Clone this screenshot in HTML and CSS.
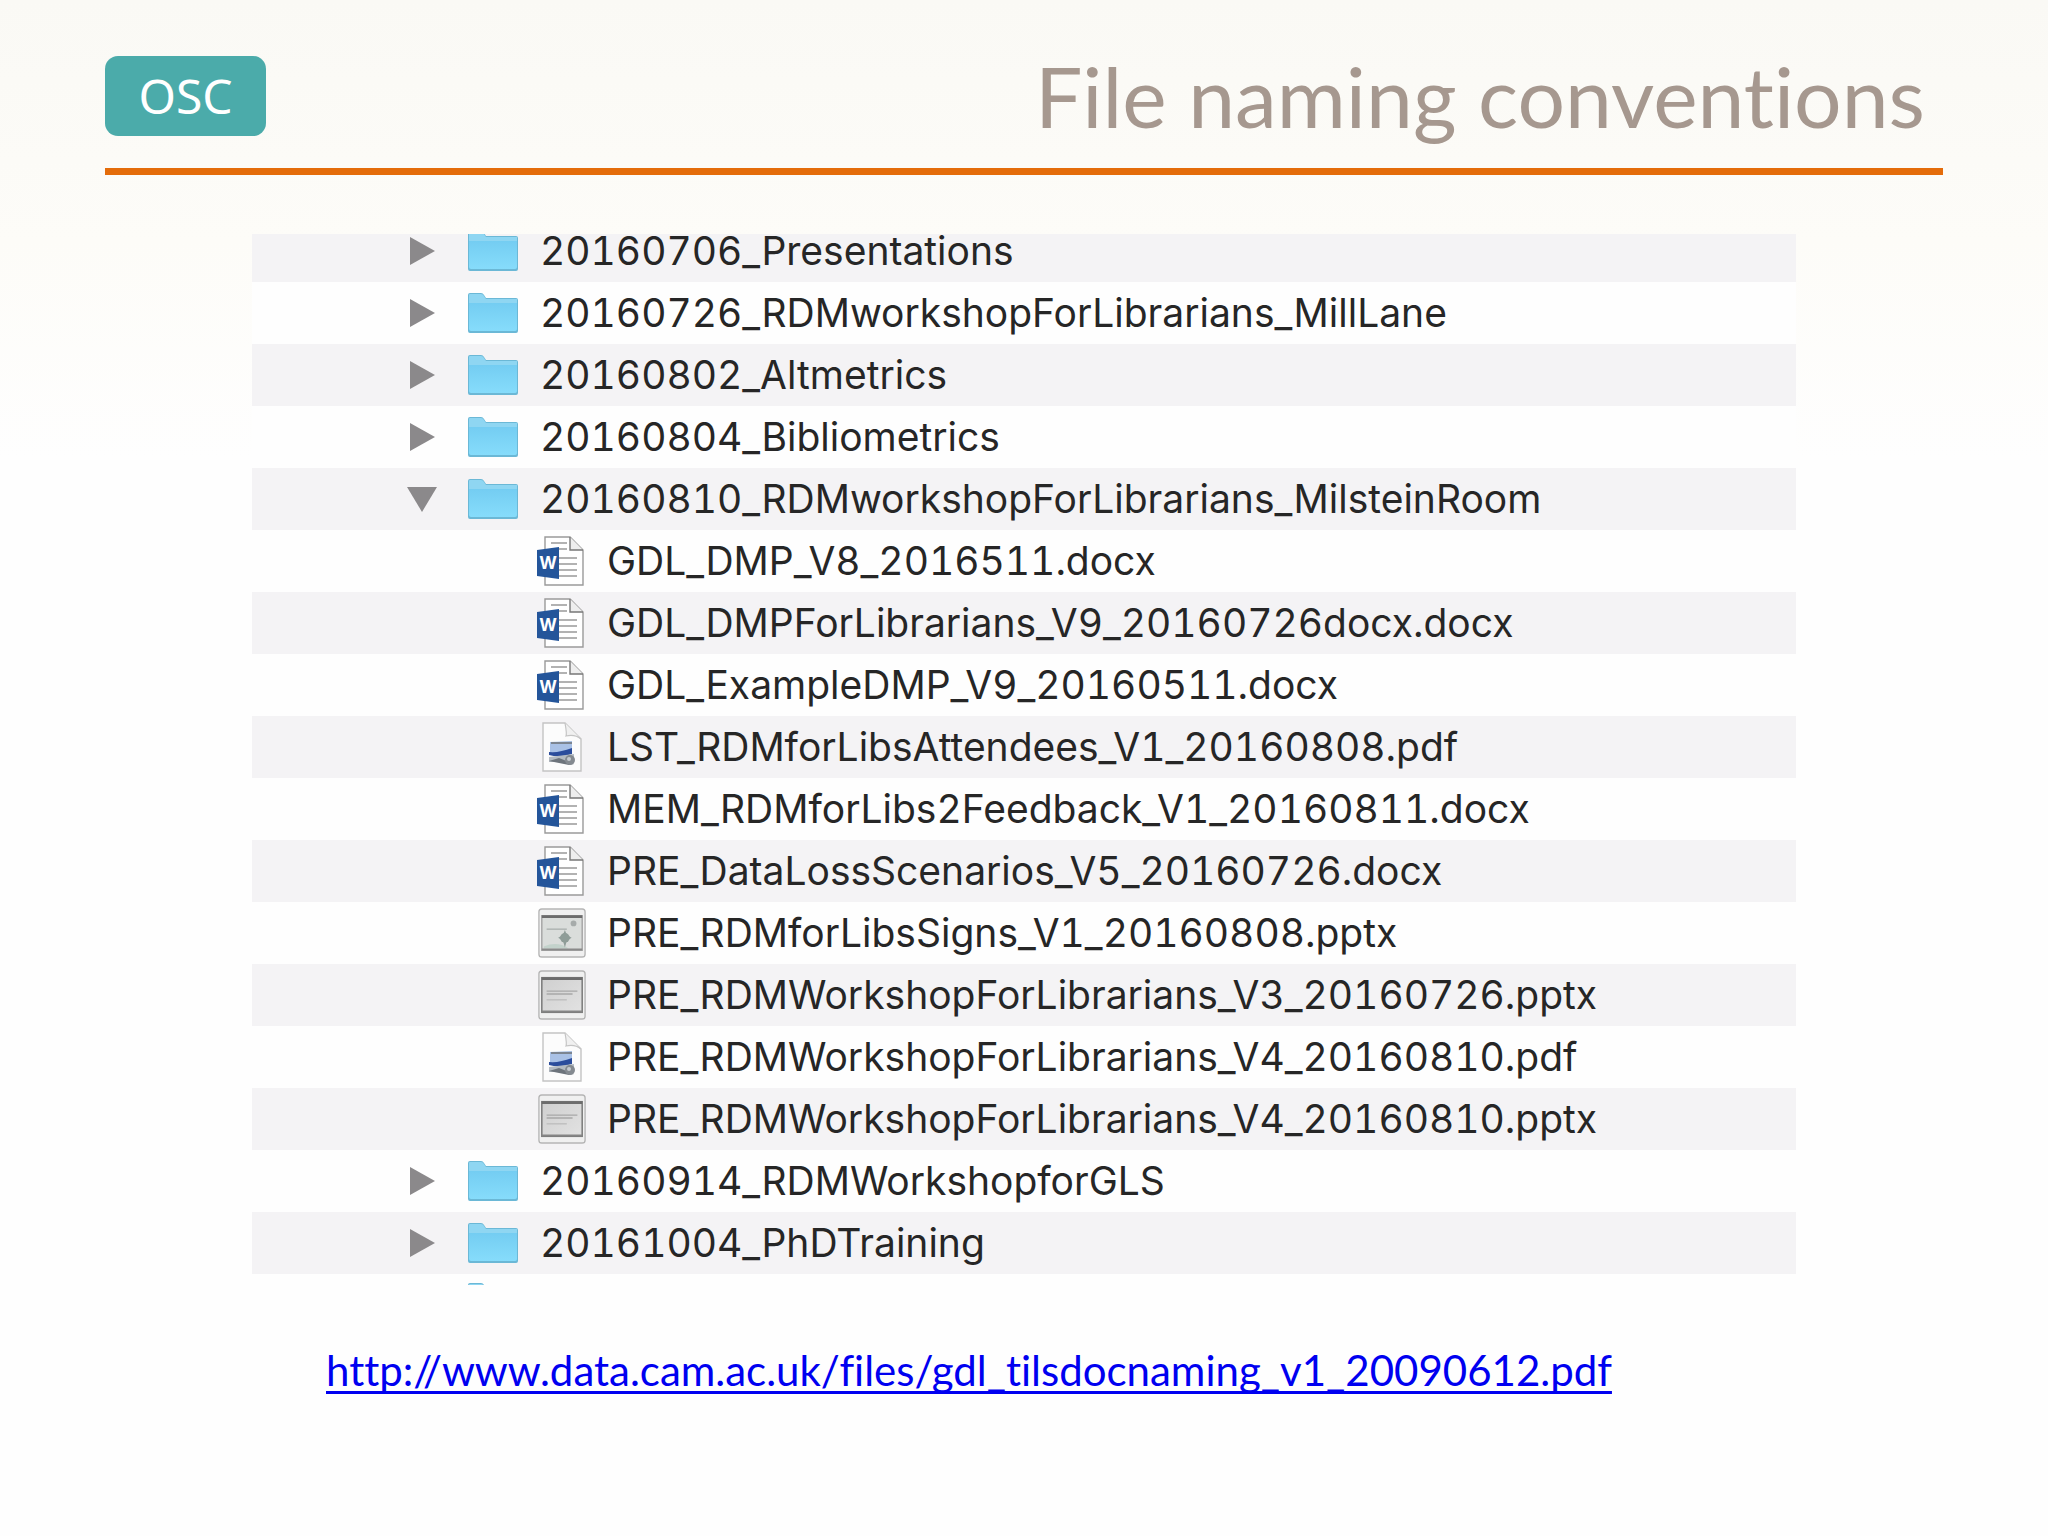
FILE: index.html
```html
<!DOCTYPE html>
<html lang="en">

<head>
    <meta charset="UTF-8">
    <meta name="viewport" content="width=device-width, initial-scale=1.0">
    <title>File naming conventions</title>
    <link rel="stylesheet" href="styles.css">
</head>

<body>
    <!-- Icon shapes, reused by the rows -->
    <svg class="sprites" aria-hidden="true">
        <defs>
            <linearGradient id="folderFill" x1="0" y1="0" x2="0" y2="1">
                <stop offset="0" stop-color="#74cdf2" />
                <stop offset="1" stop-color="#86dcfb" />
            </linearGradient>
            <linearGradient id="slideFill" x1="0" y1="0" x2="1" y2="1">
                <stop offset="0" stop-color="#cfcfcf" />
                <stop offset="1" stop-color="#e2e2e2" />
            </linearGradient>
        </defs>
        <symbol id="right" viewBox="0 0 30 30">
            <path d="M3 1 L28 15 L3 29 Z" fill="#8b898b" />
        </symbol>
        <symbol id="down" viewBox="0 0 30 30">
            <path d="M0 3 H30 L15 28 Z" fill="#8b898b" />
        </symbol>
        <symbol id="folder" viewBox="0 0 50 40">
            <path d="M0 2 Q0 0 2 0 H13 Q15 0 16 2 L18 5 H48 Q50 5 50 7 V38 Q50 40 48 40 H2 Q0 40 0 38 Z" fill="#6bb8d6" />
            <path d="M1 2 Q1 1 2 1 H13 Q15 1 16 3 L18 6 H49 V11 H1 Z" fill="#8fd6f2" />
            <path d="M1 10 H49 V36 Q49 38 47 38 H3 Q1 38 1 36 Z" fill="url(#folderFill)" />
        </symbol>
        <symbol id="word" viewBox="0 0 50 50">
            <path d="M8 1 H33 L46 14 V49 H8 Z" fill="#fff" stroke="#9a9a9a" stroke-width="1.4" />
            <path d="M33 1 V14 H46" fill="#eee" stroke="#777" stroke-width="1.4" />
            <path d="M14 7 H30 M14 13 H30 M22 22 H40 M22 28 H40 M22 34 H40 M22 40 H40" stroke="#999" stroke-width="1.4" />
            <path d="M0 14 L22 11 V43 L0 40 Z" fill="#24559a" />
        </symbol>
        <symbol id="pdf" viewBox="0 0 50 50">
            <path d="M6 1 H28 L44 17 V49 H6 Z" fill="#fcfcfc" stroke="#c4c4c4" stroke-width="1.4" />
            <path d="M28 1 Q30 12 29 14 Q38 12 44 17" fill="#f0f0f0" stroke="#c4c4c4" stroke-width="1.2" />
            <path d="M13 20 L35 19 V29 L13 31 Z" fill="#a9c1e6" />
            <path d="M14 20 H35 V22 H14 Z" fill="#7c8591" />
            <path d="M12 30 Q22 31 35 26 V32 Q23 36 12 33 Z" fill="#2b4d9c" />
            <path d="M12 35 L37 32 V40 H12 Z" fill="#b4bbc2" />
            <path d="M12 39 L22 36 L37 42 L32 43 Z" fill="#6d747c" />
            <circle cx="33" cy="38" r="5" fill="#848a90" />
            <circle cx="32" cy="37" r="2" fill="#c6cbd0" />
        </symbol>
        <symbol id="slides" viewBox="0 0 50 52">
            <rect x="1" y="1" width="48" height="50" rx="3" fill="#f0f0f0" stroke="#b5b5b5" stroke-width="1.4" />
            <rect x="4" y="8" width="42" height="36" fill="url(#slideFill)" stroke="#7c7c7c" stroke-width="1.6" />
            <path d="M4 9 H46" stroke="#6c6c6c" stroke-width="3" />
            <path d="M4 43 H46" stroke="#858585" stroke-width="2" />
            <path d="M9 22 H41 M9 25 H36" stroke="#a8a8a8" stroke-width="1.4" />
            <path d="M9 31 H30" stroke="#bdbdbd" stroke-width="1.4" />
        </symbol>
        <symbol id="signs" viewBox="0 0 50 52">
            <rect x="1" y="1" width="48" height="50" rx="3" fill="#f0f0f0" stroke="#b5b5b5" stroke-width="1.4" />
            <rect x="4" y="8" width="42" height="36" fill="#dadddb" stroke="#a0a0a0" stroke-width="1.4" />
            <path d="M6 40 Q20 34 32 42 H6 Z" fill="#c3d2cb" />
            <path d="M4 9 H46" stroke="#6c6c6c" stroke-width="3" />
            <path d="M4 43 H46" stroke="#8a8a8a" stroke-width="2" />
            <path d="M9 22 H30" stroke="#aab0ae" stroke-width="1.4" />
            <circle cx="37" cy="16" r="3" fill="#a6abaa" />
            <path d="M28 23 L30 28 L35 31 L30 34 L28 41 L26 34 L21 31 L26 28 Z" fill="#8f9d98" />
            <circle cx="28" cy="31" r="5" fill="#8f9d98" />
        </symbol>
    </svg>

    <header class="slide-header">
        <span class="badge">OSC</span>
        <h1>File naming conventions</h1>
    </header>

    <main>
        <ul class="file-list">
            <li class="row">
                <button class="toggle" aria-label="Expand"><svg><use href="#right" /></svg></button>
                <svg class="folder"><use href="#folder" /></svg>
                <span>20160706_Presentations</span>
            </li>
            <li class="row">
                <button class="toggle" aria-label="Expand"><svg><use href="#right" /></svg></button>
                <svg class="folder"><use href="#folder" /></svg>
                <span>20160726_RDMworkshopForLibrarians_MillLane</span>
            </li>
            <li class="row">
                <button class="toggle" aria-label="Expand"><svg><use href="#right" /></svg></button>
                <svg class="folder"><use href="#folder" /></svg>
                <span>20160802_Altmetrics</span>
            </li>
            <li class="row">
                <button class="toggle" aria-label="Expand"><svg><use href="#right" /></svg></button>
                <svg class="folder"><use href="#folder" /></svg>
                <span>20160804_Bibliometrics</span>
            </li>
            <li class="row">
                <button class="toggle" aria-label="Collapse"><svg><use href="#down" /></svg></button>
                <svg class="folder"><use href="#folder" /></svg>
                <span>20160810_RDMworkshopForLibrarians_MilsteinRoom</span>
            </li>

            <!-- Files in the open folder -->
            <li class="row file">
                <svg class="doc"><use href="#word" /><text x="11" y="33" text-anchor="middle">W</text></svg>
                <span>GDL_DMP_V8_2016511.docx</span>
            </li>
            <li class="row file">
                <svg class="doc"><use href="#word" /><text x="11" y="33" text-anchor="middle">W</text></svg>
                <span>GDL_DMPForLibrarians_V9_20160726docx.docx</span>
            </li>
            <li class="row file">
                <svg class="doc"><use href="#word" /><text x="11" y="33" text-anchor="middle">W</text></svg>
                <span>GDL_ExampleDMP_V9_20160511.docx</span>
            </li>
            <li class="row file">
                <svg class="doc"><use href="#pdf" /></svg>
                <span>LST_RDMforLibsAttendees_V1_20160808.pdf</span>
            </li>
            <li class="row file">
                <svg class="doc"><use href="#word" /><text x="11" y="33" text-anchor="middle">W</text></svg>
                <span>MEM_RDMforLibs2Feedback_V1_20160811.docx</span>
            </li>
            <li class="row file">
                <svg class="doc"><use href="#word" /><text x="11" y="33" text-anchor="middle">W</text></svg>
                <span>PRE_DataLossScenarios_V5_20160726.docx</span>
            </li>
            <li class="row file">
                <svg class="doc"><use href="#signs" /></svg>
                <span>PRE_RDMforLibsSigns_V1_20160808.pptx</span>
            </li>
            <li class="row file">
                <svg class="doc"><use href="#slides" /></svg>
                <span>PRE_RDMWorkshopForLibrarians_V3_20160726.pptx</span>
            </li>
            <li class="row file">
                <svg class="doc"><use href="#pdf" /></svg>
                <span>PRE_RDMWorkshopForLibrarians_V4_20160810.pdf</span>
            </li>
            <li class="row file">
                <svg class="doc"><use href="#slides" /></svg>
                <span>PRE_RDMWorkshopForLibrarians_V4_20160810.pptx</span>
            </li>

            <li class="row">
                <button class="toggle" aria-label="Expand"><svg><use href="#right" /></svg></button>
                <svg class="folder"><use href="#folder" /></svg>
                <span>20160914_RDMWorkshopforGLS</span>
            </li>
            <li class="row">
                <button class="toggle" aria-label="Expand"><svg><use href="#right" /></svg></button>
                <svg class="folder"><use href="#folder" /></svg>
                <span>20161004_PhDTraining</span>
            </li>
            <!-- Next folder, cut off by the edge of the list -->
            <li class="row cut">
                <svg class="folder"><use href="#folder" /></svg>
            </li>
        </ul>

        <p class="source"><a href="http://www.data.cam.ac.uk/files/gdl_tilsdocnaming_v1_20090612.pdf">http://www.data.cam.ac.uk/files/gdl_tilsdocnaming_v1_20090612.pdf</a></p>
    </main>
</body>

</html>
```
FILE: styles.css
```css
* {
    margin: 0;
    padding: 0;
    box-sizing: border-box;
}

:root {
    --teal: #4babaa;
    --orange: #e46c0a;
    --title: #a6988f;
    --stripe: #f4f3f5;
    --text: #262626;
}

body {
    min-height: 100vh;
    padding: 0 105px;
    font-family: Lato, sans-serif;
    font-variant-ligatures: none;
    background: linear-gradient(#faf9f5, #fdfcf8 240px, #fefefe 460px);
}

.sprites {
    position: absolute;
    width: 0;
    height: 0;
}

/* Header */
.slide-header {
    display: flex;
    justify-content: space-between;
    align-items: center;
    height: 175px;
    padding: 32px 18px 8px 0;
    border-bottom: 7px solid var(--orange);
}

.badge {
    width: 161px;
    border-radius: 13px;
    background: var(--teal);
    color: #fff;
    font-family: "Noto Sans", sans-serif;
    font-size: 48px;
    font-weight: 400;
    line-height: 80px;
    text-align: center;
}

h1 {
    color: var(--title);
    font-size: 84px;
    font-weight: 400;
    line-height: 100px;
}

/* File list */
.file-list {
    margin: 59px 147px 0;
    overflow: hidden;
    list-style: none;
    background: #fefefe;
    color: var(--text);
    font-family: Inter, sans-serif;
    font-size: 39px;
    font-variant-numeric: tabular-nums;
    line-height: 32px;
}

.row {
    display: flex;
    align-items: center;
    height: 62px;
    padding-left: 155px;
    white-space: nowrap;
}

.row:nth-child(odd) {
    background: var(--stripe);
}

.row:first-child {
    margin-top: -14px;
}

.toggle {
    width: 30px;
    height: 30px;
    margin-right: 31px;
    border: none;
    background: none;
    cursor: pointer;
}

.toggle svg {
    display: block;
    width: 30px;
    height: 30px;
}

.folder {
    width: 50px;
    height: 40px;
    margin-right: 22px;
}

.file {
    padding-left: 285px;
}

.doc {
    width: 50px;
    height: 50px;
    margin-right: 20px;
}

.doc text {
    fill: #fff;
    font-size: 17px;
    font-weight: 700;
}

.row.cut {
    align-items: flex-start;
    height: 11px;
    padding: 9px 0 0 216px;
}

/* Link under the list */
.source {
    margin: 57px 221px 0;
    font-size: 42px;
    line-height: 56px;
}

.source a {
    color: #0000f0;
    text-decoration-thickness: 3px;
    text-decoration-skip-ink: none;
    text-underline-offset: 5px;
}
```
